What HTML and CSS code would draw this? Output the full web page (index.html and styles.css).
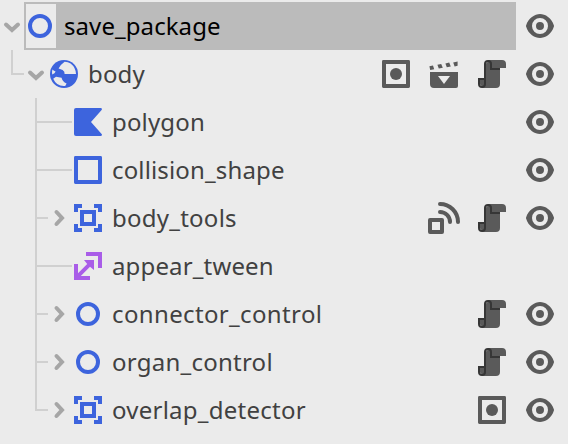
FILE: index.html
```html
<!DOCTYPE html>
<html lang="en">
<head>
<meta charset="utf-8">
<title>Scene tree</title>
<link rel="stylesheet" href="styles.css">
</head>
<body>
<svg class="defs" width="0" height="0" aria-hidden="true">
  <symbol id="down" viewBox="0 0 24 32"><path class="chev" d="M6 14.500l6 5.500 6-5.500"/></symbol>
  <symbol id="right" viewBox="0 0 24 32"><path class="chev" d="M8.500 10l5.500 6-5.500 6"/></symbol>
  <symbol id="node" viewBox="0 0 16 16"><circle cx="8" cy="8" r="5" fill="none" stroke="currentColor" stroke-width="2"/></symbol>
  <symbol id="rigid" viewBox="0 0 16 16"><circle cx="8" cy="8" r="7" fill="currentColor"/><g fill="#ebebeb"><path d="M8.300 1.900Q10 2 11.300 2.800Q13.800 4.700 14 8H8.300A2 2 0 0 0 7.300 6L5.300 5.200Q6.300 3.300 8.300 1.900z"/><path d="M2.200 5.800Q3 6.500 3.800 6.800Q3.500 7.900 2.100 8.200Q1.900 7 2.200 5.800z"/><path d="M2.600 10.400L4 9.400 6.800 9.900Q7.100 11.800 9.300 12.800L8.600 14Q4.400 14.400 2.600 10.400z"/></g></symbol>
  <symbol id="polygon" viewBox="0 0 16 16"><path fill="currentColor" d="M2 1h12.300a.6.600 0 0 1 .4 1.100L9.500 8l5.200 5.900a.6.600 0 0 1-.4 1.100H2a1 1 0 0 1-1-1V2a1 1 0 0 1 1-1z"/></symbol>
  <symbol id="shape" viewBox="0 0 16 16"><path fill="currentColor" fill-rule="evenodd" d="M1.700 1h12.600a.7.700 0 0 1 .7.700v12.600a.7.700 0 0 1-.7.700H1.700a.7.700 0 0 1-.7-.7V1.700A.7.700 0 0 1 1.700 1zM3 3v10h10V3z"/></symbol>
  <symbol id="area" viewBox="0 0 16 16"><path fill="currentColor" fill-rule="evenodd" d="M1 1h4v2H3v2H1zM11 1h4v4h-2V3h-2zM1 11h2v2h2v2H1zM13 11h2v4h-4v-2h2zM4 4h8v8H4zM6 6v4h4V6z"/></symbol>
  <symbol id="tween" viewBox="0 0 16 16"><path fill="currentColor" d="M7 1h8v8h-2V3H7zM1 7h2v4.600L7.600 7 6 5h5v5L9 8.400 4.400 13H9v2H1z"/></symbol>
  <symbol id="eye" viewBox="0 0 16 16"><path fill="currentColor" fill-rule="evenodd" d="M8 2C5.443 2 2.209 3.948 1.045 7.705a1 1 0 0 0 0 .55C2.163 12.211 5.500 14 8 14s5.836-1.789 6.961-5.725a1 1 0 0 0 0-.55C13.861 3.935 10.557 2 8 2zM8 4a4 4 0 0 1 0 8 4 4 0 0 1 0-8zM8 6a2 2 0 0 0 0 4 2 2 0 0 0 0-4z"/></symbol>
  <symbol id="group" viewBox="0 0 16 16"><use href="#shape" width="16" height="16"/><circle cx="8" cy="8" r="3" fill="currentColor"/></symbol>
  <symbol id="scene" viewBox="0 0 16 16"><path fill="currentColor" fill-rule="evenodd" d="M1 7h14v7a1 1 0 0 1-1 1H3a2 2 0 0 1-2-2zM5 9l3 4 3-4zM.700 4.100l1.800-.4.600 1.900-2 .4zM4.700 3.400l1.900-.4.800 1.900-2 .4zM8.700 2.700l1.900-.4.800 1.900-2 .4zM12.600 2.200l2.200-.4v2.100l-1.500.4z"/></symbol>
  <symbol id="script" viewBox="0 0 16 16"><path fill="currentColor" d="M6 1v1a1 1 0 0 0-1 1v10H4v-2H2v2a1 1 0 0 0 1 1v1h7a2 2 0 0 0 2-2V5h3V3a2 2 0 0 0-2-2z"/><path fill="#363636" fill-rule="evenodd" d="M6 1a2 2 0 0 0-2 2v7H1v3a2 2 0 0 0 4 0V3a1 1 0 0 1 2 0v3h5V5H8V3a2 2 0 0 0-2-2zM2 11h2v2a1 1 0 0 1-2 0z"/></symbol>
  <symbol id="signal" viewBox="0 0 16 16"><path fill="currentColor" fill-rule="evenodd" d="M1 8h6a1 1 0 0 1 1 1v6a1 1 0 0 1-1 1H1a1 1 0 0 1-1-1V9a1 1 0 0 1 1-1zM2 10v4h4v-4z"/><path fill="none" stroke="currentColor" stroke-width="2" stroke-linecap="round" d="M6 1a9 9 0 0 1 9 9M6 5a5 5 0 0 1 5 5"/></symbol>
</svg>
<main class="tree">
  <div class="row root">
    <svg class="arrow"><use href="#down"/></svg>
    <div class="selected"><span class="cell"><svg class="icon"><use href="#node"/></svg></span><span class="name snug">save_package</span></div>
    <div class="actions"><svg class="icon"><use href="#eye"/></svg></div>
  </div>
  <div class="row child">
    <span class="guide last"></span><svg class="arrow"><use href="#down"/></svg><svg class="icon"><use href="#rigid"/></svg><span class="name">body</span>
    <div class="actions"><svg class="icon"><use href="#group"/></svg><svg class="icon"><use href="#scene"/></svg><svg class="icon"><use href="#script"/></svg><svg class="icon"><use href="#eye"/></svg></div>
  </div>
  <div class="row leaf">
    <span class="guide long"></span><svg class="icon"><use href="#polygon"/></svg><span class="name">polygon</span>
    <div class="actions"><svg class="icon"><use href="#eye"/></svg></div>
  </div>
  <div class="row leaf">
    <span class="guide long"></span><svg class="icon"><use href="#shape"/></svg><span class="name">collision_shape</span>
    <div class="actions"><svg class="icon"><use href="#eye"/></svg></div>
  </div>
  <div class="row leaf">
    <span class="guide"></span><svg class="arrow"><use href="#right"/></svg><svg class="icon"><use href="#area"/></svg><span class="name loose">body_tools</span>
    <div class="actions"><svg class="icon"><use href="#signal"/></svg><svg class="icon"><use href="#script"/></svg><svg class="icon"><use href="#eye"/></svg></div>
  </div>
  <div class="row leaf">
    <span class="guide long"></span><svg class="icon tween"><use href="#tween"/></svg><span class="name">appear_tween</span>
  </div>
  <div class="row leaf">
    <span class="guide"></span><svg class="arrow"><use href="#right"/></svg><svg class="icon"><use href="#node"/></svg><span class="name wide">connector_control</span>
    <div class="actions"><svg class="icon"><use href="#script"/></svg><svg class="icon"><use href="#eye"/></svg></div>
  </div>
  <div class="row leaf">
    <span class="guide"></span><svg class="arrow"><use href="#right"/></svg><svg class="icon"><use href="#node"/></svg><span class="name loose">organ_control</span>
    <div class="actions"><svg class="icon"><use href="#script"/></svg><svg class="icon"><use href="#eye"/></svg></div>
  </div>
  <div class="row leaf">
    <span class="guide last"></span><svg class="arrow"><use href="#right"/></svg><svg class="icon"><use href="#area"/></svg><span class="name loose">overlap_detector</span>
    <div class="actions"><svg class="icon"><use href="#group"/></svg><svg class="icon"><use href="#eye"/></svg></div>
  </div>
</main>
</body>
</html>
```
FILE: styles.css
```css
body {
  margin: 0;
  background: #ebebeb;
  color: #414141;
  font: 24px/48px "Noto Sans", sans-serif;
}
.defs { display: block; }
.tree {
  width: 568px;
  height: 444px;
  box-sizing: border-box;
  padding-top: 2px;
  overflow: hidden;
}
.row {
  display: flex;
  align-items: center;
  height: 48px;
  padding-right: 12px;
}
.child { padding-left: 11px; }
.leaf { padding-left: 35px; }
.icon {
  flex: none;
  width: 32px;
  height: 32px;
  color: #3d64dd;
}
.tween { color: #a95de8; }
.arrow {
  flex: none;
  width: 24px;
  height: 32px;
}
.chev {
  fill: none;
  stroke: #a6a6a6;
  stroke-width: 4;
  stroke-linecap: round;
}
.guide {
  flex: none;
  align-self: stretch;
  width: 13px;
  background:
    linear-gradient(#d0d0d0, #d0d0d0) 0 0 / 2px 100% no-repeat,
    linear-gradient(#d0d0d0, #d0d0d0) 0 23px / 100% 2px no-repeat;
}
.guide.last {
  background-size: 2px 25px, 100% 2px;
}
.guide.long { width: 37px; }
.name {
  margin-left: 8px;
  letter-spacing: 0.15px;
  white-space: pre;
}
.name.snug { letter-spacing: 0.08px; }
.name.loose { letter-spacing: 0.25px; }
.name.wide { letter-spacing: 0.36px; }
.selected {
  display: flex;
  width: 492px;
  height: 48px;
  background: #bbb;
  color: #000;
}
.cell {
  display: flex;
  align-items: center;
  justify-content: center;
  width: 30px;
  height: 44px;
  margin: 2px 0 0 2px;
  background: #ebebeb;
}
.cell .icon { margin: 0 -1px 0 -3px; }
.actions {
  display: flex;
  gap: 16px;
  margin-left: auto;
}
.actions .icon { color: #5a5a5a; }
```
